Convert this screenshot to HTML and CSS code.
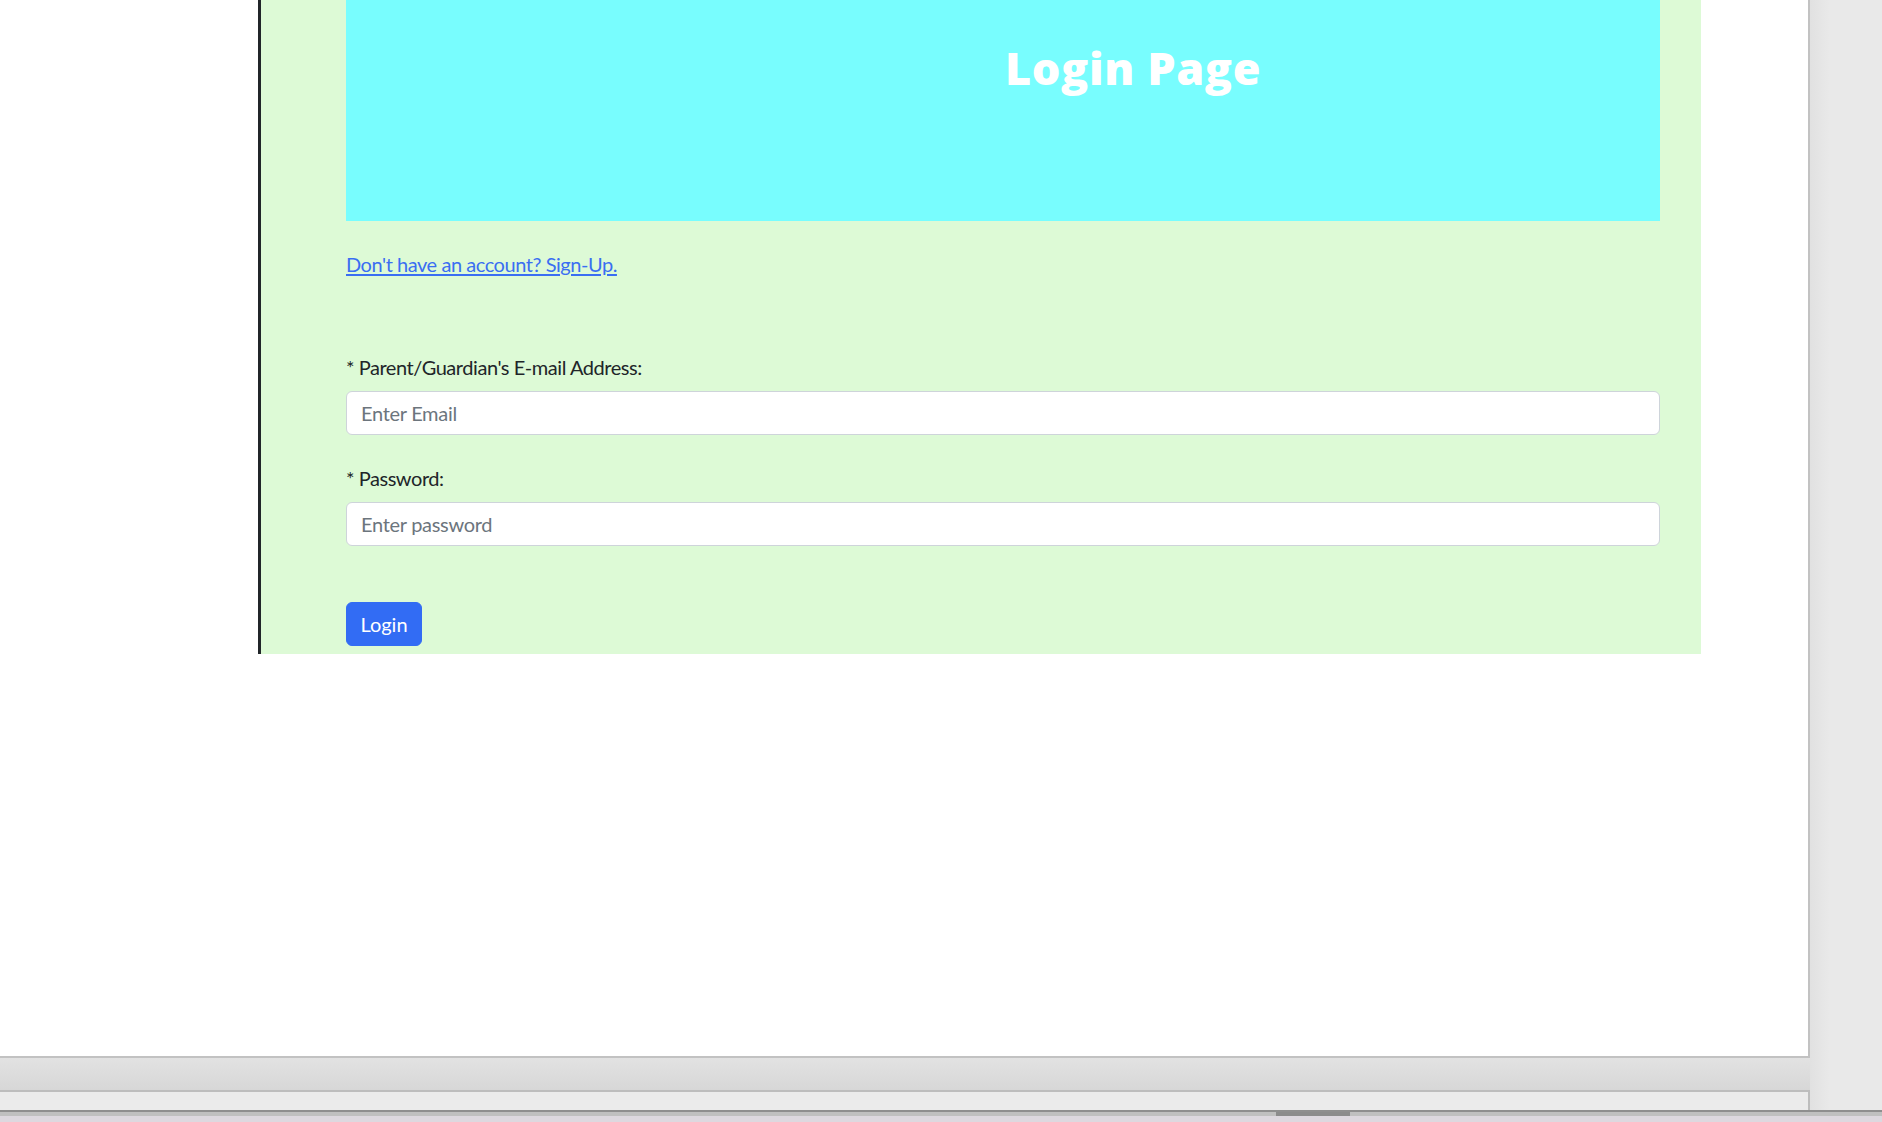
FILE: index.html
```html
<!DOCTYPE html>
<html lang="en">
<head>
<meta charset="utf-8">
<title>Login Page</title>
<link rel="stylesheet" href="styles.css">
</head>
<body>
<div class="viewer">
  <div class="workspace">
    <div class="page">
      <div class="sheet">
        <header class="hero">
          <h1 class="title">Login Page</h1>
        </header>
        <a class="signup" href="#">Don't have an account? Sign-Up.</a>
        <form class="login-form">
          <div class="field">
            <label class="field-label" for="email">* Parent/Guardian's E-mail Address:</label>
            <input class="field-input" id="email" type="email" placeholder="Enter Email">
          </div>
          <div class="field">
            <label class="field-label" for="pwd">* Password:</label>
            <input class="field-input" id="pwd" type="password" placeholder="Enter password">
          </div>
          <button class="btn-login" type="button">Login</button>
        </form>
      </div>
    </div>
    <div class="band"></div>
    <div class="lower-bar"></div>
  </div>
  <div class="hscroll"><div class="thumb"></div></div>
</div>
</body>
</html>
```
FILE: styles.css
```css
html, body {
  margin: 0;
  padding: 0;
}
body {
  width: 1882px;
  height: 1122px;
  overflow: hidden;
  font-family: Lato, "Open Sans", sans-serif;
  color: #212529;
}
.viewer {
  display: flex;
  flex-direction: column;
  height: 1122px;
}
.workspace {
  height: 1110px;
  display: flex;
  flex-direction: column;
  background: linear-gradient(90deg, #e1e1e1 1810px, #e9e9e9 1830px);
}
.page {
  width: 1808px;
  height: 1056px;
  background: #ffffff;
  border-right: 2px solid #c2c2c2;
  border-bottom: 2px solid #c2c2c2;
}
.sheet {
  margin-left: 258px;
  width: 1443px;
  box-sizing: border-box;
  border-left: 3px solid #212529;
  background: #ddfad6;
  padding: 0 41px 8px 85px;
}
.hero {
  background: #78fdfe;
  height: 221px;
  box-sizing: border-box;
  padding-top: 41px;
  padding-left: 659px;
}
.title {
  margin: 0;
  font-family: "Open Sans", sans-serif;
  font-weight: 800;
  font-size: 45px;
  line-height: 54px;
  letter-spacing: 0.6px;
  color: #ffffff;
}
.signup {
  display: block;
  width: max-content;
  margin-top: 28px;
  font-size: 20px;
  line-height: 30px;
  letter-spacing: -0.45px;
  color: #3a6ef2;
  text-decoration: underline;
  text-underline-offset: 2px;
}
.login-form {
  margin-top: 72.5px;
  display: flex;
  flex-direction: column;
}
.field {
  display: flex;
  flex-direction: column;
  margin-bottom: 28px;
}
.field:last-of-type {
  margin-bottom: 0;
}
.field-label {
  font-size: 20px;
  line-height: 30px;
  letter-spacing: -0.45px;
  margin-bottom: 9px;
  color: #212529;
}
.field-input {
  height: 44px;
  box-sizing: border-box;
  border: 1px solid #ced4da;
  border-radius: 6px;
  background: #ffffff;
  padding: 0 14px;
  font-family: Lato, sans-serif;
  font-size: 20px;
  letter-spacing: -0.3px;
  color: #212529;
  outline: none;
}
.field-input::placeholder {
  color: #6c757d;
}
.btn-login {
  margin-top: 56.2px;
  align-self: flex-start;
  height: 44px;
  width: 76px;
  box-sizing: border-box;
  padding: 0;
  border: 1px solid #326cf4;
  border-radius: 6px;
  background: #326cf4;
  color: #ffffff;
  font-family: Lato, sans-serif;
  font-size: 20px;
  line-height: 30px;
}
.band {
  width: 1810px;
  height: 32px;
  background: linear-gradient(180deg, #e2e2e2, #d7d7d7);
}
.lower-bar {
  width: 1808px;
  height: 18px;
  border-top: 2px solid #bdbdbd;
  border-right: 2px solid #bdbdbd;
  background: #ebebeb;
}
.hscroll {
  height: 12px;
  box-sizing: border-box;
  border-top: 2px solid #8f8f8f;
  background: linear-gradient(180deg, #c0c0c0 0 4px, #ddd8df 4px);
}
.thumb {
  margin-left: 1276px;
  width: 74px;
  height: 4px;
  background: #8c8c8c;
}
```
